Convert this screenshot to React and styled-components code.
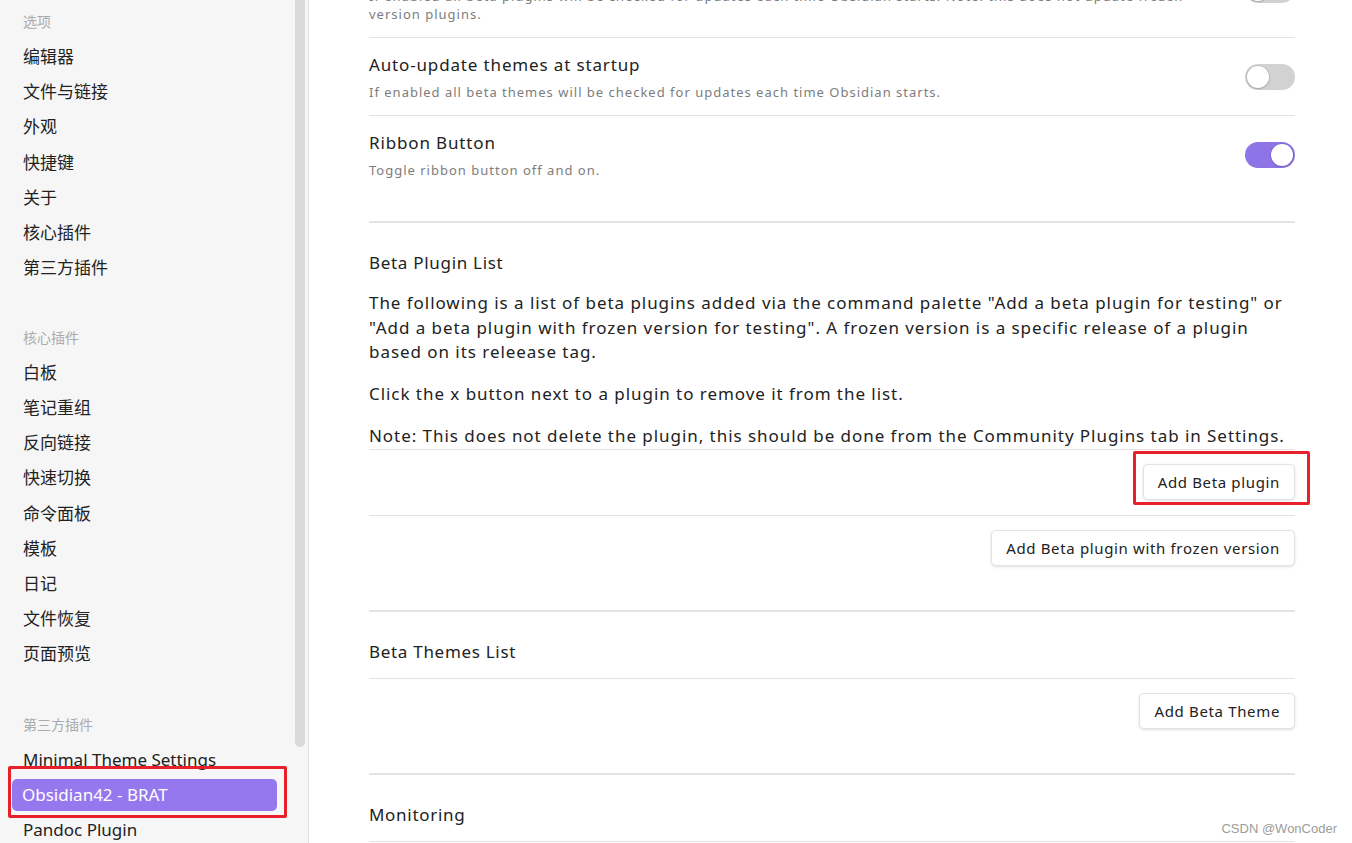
import React from 'react';
import styled, { createGlobalStyle } from 'styled-components';

const FONT = `"Noto Sans", "Noto Sans CJK SC", sans-serif`;

const Global = createGlobalStyle`
  html, body { margin: 0; padding: 0; height: 100%; overflow: hidden; }
  body { font-family: ${FONT}; color: #222; background: #fff; }
  #root { height: 100%; }
  * { box-sizing: border-box; }
`;

const Layout = styled.div`
  display: flex;
  height: 843px;
  overflow: hidden;
  position: relative;
`;

const Sidebar = styled.aside`
  width: 309px;
  flex: none;
  display: flex;
  background: #f6f6f6;
  border-right: 1px solid #e0e0e0;
`;

const NavColumn = styled.nav`
  flex: 1;
  padding: 10px 18px 0 12px;
`;

const ScrollTrack = styled.div`
  width: 13px;
  flex: none;
  padding-right: 3px;
`;

const ScrollThumb = styled.div`
  width: 10px;
  height: 747px;
  background: #dadada;
  border-radius: 0 0 5px 5px;
`;

const Section = styled.div`
  display: flex;
  flex-direction: column;
  margin-top: ${p => p.$gap || 0}px;
`;

const GroupHeader = styled.div`
  height: 24px;
  line-height: 24px;
  padding-left: 11px;
  margin-bottom: 5.5px;
  font-size: 14px;
  color: #ababab;
`;

const NavItem = styled.div`
  position: relative;
  height: 32px;
  line-height: 32px;
  margin: 1.6px 0;
  padding-left: ${p => (p.$active ? 10 : 11)}px;
  border-radius: 5px;
  font-size: 17px;
  color: ${p => (p.$active ? '#fff' : '#222')};
  background: ${p => (p.$active ? '#9678ee' : 'transparent')};
  white-space: nowrap;
`;

const RedMark = styled.span`
  position: absolute;
  top: ${p => p.$t}px;
  left: ${p => p.$l}px;
  right: ${p => p.$r}px;
  bottom: ${p => p.$b}px;
  border: 3px solid #e8202a;
  border-radius: 2px;
  pointer-events: none;
`;

const Main = styled.main`
  flex: 1;
  overflow: hidden;
  padding: 0 57px 0 60px;
`;

const Content = styled.div`
  margin-top: -58px;
`;

const SettingRow = styled.div`
  display: flex;
  align-items: center;
  gap: 24px;
  border-top: ${p => (p.$noBorder ? 'none' : '1px solid #e3e3e3')};
  padding: 15px 0 14px;
`;

const Info = styled.div`
  flex: 1;
  min-width: 0;
`;

const Name = styled.div`
  font-size: 17px;
  line-height: 24px;
  letter-spacing: 0.85px;
  color: #222;
`;

const Desc = styled.div`
  margin-top: 6px;
  font-size: 13px;
  line-height: 18px;
  letter-spacing: 1px;
  color: #7d7d7d;
  white-space: nowrap;
`;

const Toggle = styled.div`
  position: relative;
  width: 50px;
  height: 26px;
  flex: none;
  border-radius: 13px;
  background: ${p => (p.$on ? '#8f74e8' : '#d2d2d2')};
`;

const Knob = styled.span`
  position: absolute;
  top: 2px;
  left: ${p => (p.$on ? 26 : 2)}px;
  width: 22px;
  height: 22px;
  border-radius: 50%;
  background: #fff;
  box-shadow: 0 0 0 1px rgba(0,0,0,0.08), 0 1px 2px rgba(0,0,0,0.15);
`;

const Rule = styled.div`
  height: 2px;
  margin-top: ${p => p.$gap}px;
  background: #e3e3e3;
`;

const Heading = styled.div`
  padding: 28px 0 14px;
  font-size: 17px;
  line-height: 24px;
  letter-spacing: 0.7px;
  color: #222;
`;

const ParaBlock = styled.div`
  padding-top: 2px;
`;

const Para = styled.p`
  margin: 0 0 17.5px;
  font-size: 17px;
  line-height: 24.5px;
  letter-spacing: 0.95px;
  color: #222;
  white-space: nowrap;
  &:last-child { margin-bottom: 0; }
`;

const ButtonRow = styled.div`
  display: flex;
  justify-content: flex-end;
  border-top: 1px solid #e3e3e3;
  padding: 14.5px 0;
`;

const ButtonWrap = styled.span`
  position: relative;
  display: inline-flex;
`;

const Button = styled.button`
  height: 36px;
  padding: 0 14px;
  border: 1px solid #e2e2e2;
  border-radius: 5px;
  background: #fff;
  box-shadow: 0 1px 3px rgba(0,0,0,0.12);
  font-family: ${FONT};
  font-size: 15px;
  letter-spacing: 0.65px;
  color: #222;
  cursor: pointer;
`;

const Watermark = styled.div`
  position: absolute;
  right: 15px;
  bottom: 7px;
  font-family: "Liberation Sans", Arial, sans-serif;
  font-size: 13px;
  color: #9c9c9c;
`;

const optionItems = ['编辑器', '文件与链接', '外观', '快捷键', '关于', '核心插件', '第三方插件'];
const coreItems = ['白板', '笔记重组', '反向链接', '快速切换', '命令面板', '模板', '日记', '文件恢复', '页面预览'];

function Switch({ on }) {
  return (
    <Toggle $on={on}>
      <Knob $on={on} />
    </Toggle>
  );
}

export default function App() {
  return (
    <>
      <Global />
      <Layout>
        <Sidebar>
          <NavColumn>
            <Section>
              <GroupHeader>选项</GroupHeader>
              {optionItems.map(t => <NavItem key={t}>{t}</NavItem>)}
            </Section>
            <Section $gap={40}>
              <GroupHeader>核心插件</GroupHeader>
              {coreItems.map(t => <NavItem key={t}>{t}</NavItem>)}
            </Section>
            <Section $gap={41}>
              <GroupHeader>第三方插件</GroupHeader>
              <NavItem>Minimal Theme Settings</NavItem>
              <NavItem $active>
                Obsidian42 - BRAT
                <RedMark $t={-13} $l={-4} $r={-10} $b={-7} />
              </NavItem>
              <NavItem>Pandoc Plugin</NavItem>
            </Section>
          </NavColumn>
          <ScrollTrack>
            <ScrollThumb />
          </ScrollTrack>
        </Sidebar>

        <Main>
          <Content>
            <SettingRow $noBorder>
              <Info>
                <Name>Auto-update plugins at startup</Name>
                <Desc>
                  If enabled all beta plugins will be checked for updates each time Obsidian starts. Note: this does not update frozen
                  <br />
                  version plugins.
                </Desc>
              </Info>
              <Switch on={false} />
            </SettingRow>
            <SettingRow>
              <Info>
                <Name>Auto-update themes at startup</Name>
                <Desc>If enabled all beta themes will be checked for updates each time Obsidian starts.</Desc>
              </Info>
              <Switch on={false} />
            </SettingRow>
            <SettingRow>
              <Info>
                <Name>Ribbon Button</Name>
                <Desc>Toggle ribbon button off and on.</Desc>
              </Info>
              <Switch on />
            </SettingRow>

            <Rule $gap={28} />
            <Heading>Beta Plugin List</Heading>
            <ParaBlock>
              <Para>
                The following is a list of beta plugins added via the command palette "Add a beta plugin for testing" or
                <br />
                "Add a beta plugin with frozen version for testing". A frozen version is a specific release of a plugin
                <br />
                based on its releease tag.
              </Para>
              <Para>Click the x button next to a plugin to remove it from the list.</Para>
              <Para>Note: This does not delete the plugin, this should be done from the Community Plugins tab in Settings.</Para>
            </ParaBlock>
            <ButtonRow>
              <ButtonWrap>
                <Button>Add Beta plugin</Button>
                <RedMark $t={-13} $l={-10} $r={-15} $b={-5} />
              </ButtonWrap>
            </ButtonRow>
            <ButtonRow>
              <Button>Add Beta plugin with frozen version</Button>
            </ButtonRow>

            <Rule $gap={29} />
            <Heading>Beta Themes List</Heading>
            <ButtonRow>
              <Button>Add Beta Theme</Button>
            </ButtonRow>

            <Rule $gap={29} />
            <Heading>Monitoring</Heading>
            <SettingRow>
              <Info>
                <Name>Enable Notifications</Name>
                <Desc>BRAT will provide popup notifications for its various activities. Turn this off means no notifications from BRAT.</Desc>
              </Info>
              <Switch on />
            </SettingRow>
          </Content>
        </Main>
        <Watermark>CSDN @WonCoder</Watermark>
      </Layout>
    </>
  );
}
